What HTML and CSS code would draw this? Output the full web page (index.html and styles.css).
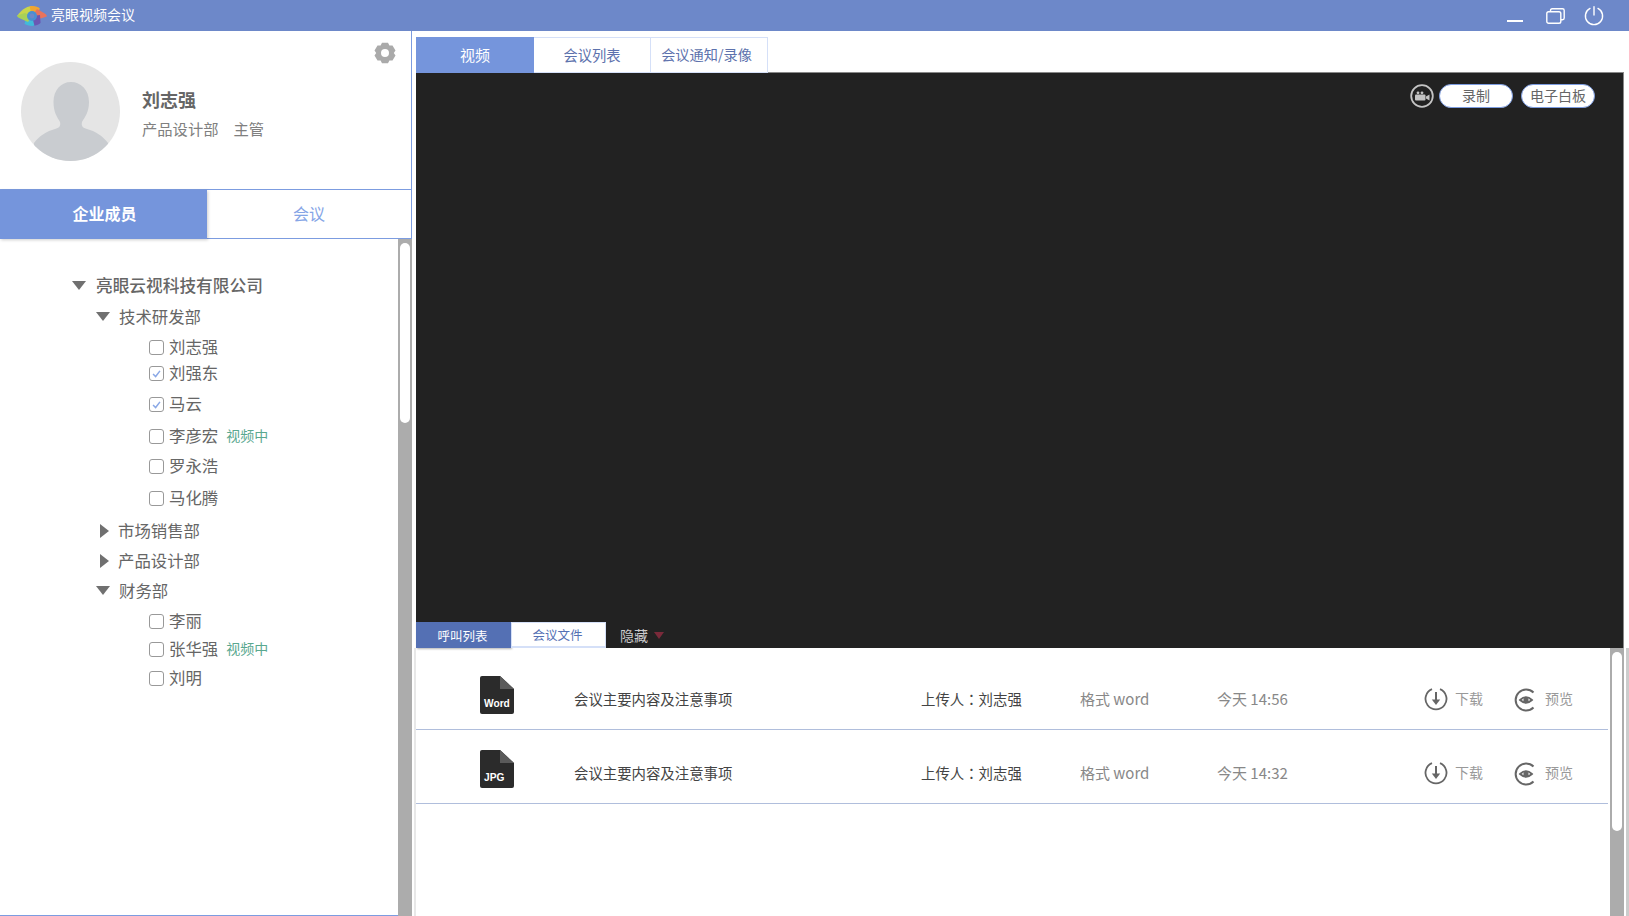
FILE: index.html
```html
<!DOCTYPE html>
<html>
<head>
    <meta charset="utf-8">
    <title>亮眼视频会议</title>
    <link rel="stylesheet" href="styles.css">
</head>
<body>
<div class="app">
    <header class="titlebar">
        <svg class="logo" viewBox="0 0 30 20">
            <defs><clipPath id="eye"><path d="M0 10 C6 2 11 0 16 0 C21 0 26 4 30 10 C26 16 21 20 15 20 C9 20 4 16 0 10Z"/></clipPath></defs>
            <g clip-path="url(#eye)">
                <path d="M15 10 L-2 10 L6 -2 L14 -2Z" fill="#c8d54c"/>
                <path d="M15 10 L12 -2 L24 -2 L22 5Z" fill="#f0a532"/>
                <path d="M15 10 L20 3 L32 10 L22 13Z" fill="#e9735c"/>
                <path d="M15 10 L23 9 L24 22 L16 22Z" fill="#6b57b3"/>
                <path d="M15 10 L18 22 L6 22 L9 13Z" fill="#42b9da"/>
                <path d="M15 10 L11 16 L-2 10 L8 7Z" fill="#a8d058"/>
                <circle cx="15" cy="10" r="5" fill="#4a8fd2"/>
                <circle cx="15" cy="10" r="2.4" fill="#6d88c9"/>
            </g>
        </svg>
        <span class="app-name">亮眼视频会议</span>
        <div class="win-btns">
            <svg class="win-min" viewBox="0 0 16 2"><rect width="16" height="2" fill="#fff"/></svg>
            <svg class="win-max" viewBox="0 0 19 16" fill="none" stroke="#fff" stroke-width="1.4">
                <path d="M4.5 3.5 V2.5 Q4.5 .8 6.2 .8 H16.5 Q18.2 .8 18.2 2.5 V10 Q18.2 11.7 16.5 11.7 H15"/>
                <rect x=".8" y="3.7" width="14" height="11.5" rx="1.8"/>
            </svg>
            <svg class="win-power" viewBox="0 0 20 20" fill="none" stroke="#fff" stroke-width="1.4" stroke-linecap="round">
                <path d="M6 2.4 A8.6 8.6 0 1 0 14 2.4"/>
                <path d="M10 .8 V9"/>
            </svg>
        </div>
    </header>

    <div class="main">
        <aside class="sidebar">
            <section class="profile">
                <svg class="avatar" viewBox="0 0 99 99">
                    <defs><clipPath id="face"><circle cx="49.5" cy="49.5" r="49.5"/></clipPath></defs>
                    <circle cx="49.5" cy="49.5" r="49.5" fill="#e5e5e5"/>
                    <g clip-path="url(#face)" fill="#c9ccd0">
                        <path d="M50 20 C60 20 68 28 68 40 C68 50 64 55 61 60 C60 64 62 66 66 67 C74 69 82 74 87 81 L87 99 L13 99 L13 81 C18 74 26 69 34 67 C38 66 40 64 39 60 C36 55 32.5 50 32.5 40 C32.5 28 40 20 50 20Z"/>
                    </g>
                </svg>
                <div class="who">
                    <div class="who-name">刘志强</div>
                    <div class="who-dept"><span>产品设计部</span><span>主管</span></div>
                </div>
                <svg class="gear" viewBox="0 0 22 22" fill="#aaa">
                    <path fill-rule="evenodd" d="M8 .8 H14 L15.4 3.6 L18.5 3.4 L21.5 8.6 L19.8 11 L21.5 13.4 L18.5 18.6 L15.4 18.4 L14 21.2 H8 L6.6 18.4 L3.5 18.6 L.5 13.4 L2.2 11 L.5 8.6 L3.5 3.4 L6.6 3.6Z M11 7 A4 4 0 1 0 11 15 A4 4 0 1 0 11 7Z"/>
                </svg>
            </section>

            <nav class="side-tabs">
                <div class="side-tab active">企业成员</div>
                <div class="side-tab">会议</div>
            </nav>

            <div class="tree-wrap">
                <div class="tree">
                    <div class="row lv0 company"><i class="tri-down"></i>亮眼云视科技有限公司</div>
                    <div class="row lv1 mt1"><i class="tri-down"></i>技术研发部</div>
                    <div class="row lv2"><i class="check"></i>刘志强</div>
                    <div class="row lv2 mtn4"><i class="check on"><svg viewBox="0 0 15 15"><path d="M3.5 8 L6.5 11 L11.5 4.5" fill="none" stroke="#8aa8e6" stroke-width="1.7"/></svg></i>刘强东</div>
                    <div class="row lv2 mt1"><i class="check on"><svg viewBox="0 0 15 15"><path d="M3.5 8 L6.5 11 L11.5 4.5" fill="none" stroke="#8aa8e6" stroke-width="1.7"/></svg></i>马云</div>
                    <div class="row lv2 mt2"><i class="check"></i>李彦宏<span class="live">视频中</span></div>
                    <div class="row lv2"><i class="check"></i>罗永浩</div>
                    <div class="row lv2 mt2"><i class="check"></i>马化腾</div>
                    <div class="row lv1 mt3"><i class="tri-right"></i>市场销售部</div>
                    <div class="row lv1"><i class="tri-right"></i>产品设计部</div>
                    <div class="row lv1"><i class="tri-down"></i>财务部</div>
                    <div class="row lv2"><i class="check"></i>李丽</div>
                    <div class="row lv2 mtn2"><i class="check"></i>张华强<span class="live">视频中</span></div>
                    <div class="row lv2 mtn1"><i class="check"></i>刘明</div>
                </div>
                <div class="scroll-track side-scroll"><div class="scroll-thumb"></div></div>
            </div>
        </aside>

        <main class="content">
            <nav class="top-tabs">
                <div class="top-tab active">视频</div>
                <div class="top-tab mid">会议列表</div>
                <div class="top-tab last">会议通知/录像</div>
            </nav>

            <section class="video">
                <div class="video-tools">
                    <svg class="cam" viewBox="0 0 24 24">
                        <circle cx="12" cy="12" r="10.8" fill="none" stroke="#c4c4c4" stroke-width="1.8"/>
                        <rect x="5" y="10.5" width="10.5" height="6" rx="1" fill="#c4c4c4"/>
                        <circle cx="8" cy="8.8" r="1.4" fill="#c4c4c4"/>
                        <circle cx="12" cy="8.8" r="1.4" fill="#c4c4c4"/>
                        <path d="M16 12.5 L19.5 10.5 V16.5 L16 14.5Z" fill="#c4c4c4"/>
                    </svg>
                    <button class="pill">录制</button>
                    <button class="pill">电子白板</button>
                </div>
                <div class="sub-tabs">
                    <div class="sub-tab active">呼叫列表</div>
                    <div class="sub-tab">会议文件</div>
                    <div class="hide-btn">隐藏<i class="tri-red"></i></div>
                </div>
            </section>

            <section class="files">
                <div class="file-list">
                    <div class="file-row">
                        <svg class="file-icon" viewBox="0 0 34 38">
                            <path d="M2 0 H20 L34 13 V36 Q34 38 32 38 H2 Q0 38 0 36 V2 Q0 0 2 0Z" fill="#2b2b2b"/>
                            <path d="M20 0 L34 13 H20Z" fill="#5a5a5a"/>
                            <text x="4" y="31" class="file-type">Word</text>
                        </svg>
                        <span class="file-name">会议主要内容及注意事项</span>
                        <span class="file-owner">上传人<span class="colon">：</span>刘志强</span>
                        <span class="file-meta">格式 word</span>
                        <span class="file-meta">今天 14:56</span>
                        <span class="file-action">
                            <svg class="act-icon" viewBox="0 0 24 24" fill="none" stroke="#666" stroke-width="1.8"><path d="M8 2.2 A10.5 10.5 0 1 0 16 2.2"/><path d="M12 5 V13.5" stroke-width="2"/><path d="M7.8 12.5 H16.2 L12 18Z" fill="#666" stroke="none"/></svg>
                            下载
                        </span>
                        <span class="file-action">
                            <svg class="act-icon act-eye" viewBox="0 0 24 24" fill="none" stroke="#666" stroke-width="2"><path d="M19.5 4.5 A10.5 10.5 0 1 0 19.5 19.5"/><path d="M6 12 Q12 6.5 18 12 Q12 17.5 6 12Z" stroke-width="1.8"/><circle cx="12" cy="12" r="2.6" fill="#666" stroke="none"/></svg>
                            预览
                        </span>
                    </div>
                    <div class="file-row">
                        <svg class="file-icon" viewBox="0 0 34 38">
                            <path d="M2 0 H20 L34 13 V36 Q34 38 32 38 H2 Q0 38 0 36 V2 Q0 0 2 0Z" fill="#2b2b2b"/>
                            <path d="M20 0 L34 13 H20Z" fill="#5a5a5a"/>
                            <text x="4" y="31" class="file-type">JPG</text>
                        </svg>
                        <span class="file-name">会议主要内容及注意事项</span>
                        <span class="file-owner">上传人<span class="colon">：</span>刘志强</span>
                        <span class="file-meta">格式 word</span>
                        <span class="file-meta">今天 14:32</span>
                        <span class="file-action">
                            <svg class="act-icon" viewBox="0 0 24 24" fill="none" stroke="#666" stroke-width="1.8"><path d="M8 2.2 A10.5 10.5 0 1 0 16 2.2"/><path d="M12 5 V13.5" stroke-width="2"/><path d="M7.8 12.5 H16.2 L12 18Z" fill="#666" stroke="none"/></svg>
                            下载
                        </span>
                        <span class="file-action">
                            <svg class="act-icon act-eye" viewBox="0 0 24 24" fill="none" stroke="#666" stroke-width="2"><path d="M19.5 4.5 A10.5 10.5 0 1 0 19.5 19.5"/><path d="M6 12 Q12 6.5 18 12 Q12 17.5 6 12Z" stroke-width="1.8"/><circle cx="12" cy="12" r="2.6" fill="#666" stroke="none"/></svg>
                            预览
                        </span>
                    </div>
                </div>
                <div class="scroll-track file-scroll"><div class="scroll-thumb"></div></div>
            </section>
        </main>
    </div>
</div>
</body>
</html>
```

FILE: styles.css
```css
* { box-sizing: border-box; }
html, body { margin: 0; height: 100%; overflow: hidden; background: #fff; }
body { font-family: "Noto Sans CJK SC", "Noto Sans", sans-serif; color: #666; }
.app { display: flex; flex-direction: column; height: 916px; }

/* title bar */
.titlebar { display: flex; align-items: center; height: 31px; padding-left: 17px; background: #6d88c9; flex: none; }
.logo { width: 30px; height: 20px; }
.app-name { margin: -3px 0 0 4px; font-size: 14px; color: #fff; }
.win-btns { display: flex; align-items: center; margin-left: auto; padding-right: 25px; }
.win-min { width: 16px; height: 2px; margin-top: 10px; }
.win-max { width: 19px; height: 16px; margin-left: 23px; }
.win-power { width: 20px; height: 20px; margin-left: 19px; }

.main { display: flex; flex: 1; min-height: 0; }

/* left side */
.sidebar { display: flex; flex-direction: column; width: 412px; flex: none; }
.profile { display: flex; align-items: center; height: 158px; padding: 3px 0 0 21px; border-right: 1px solid #7c9ce0; position: relative; }
.avatar { width: 99px; height: 99px; flex: none; }
.who { margin-left: 22px; margin-top: 2px; }
.who-name { font-size: 18px; font-weight: 700; color: #666; line-height: 26px; }
.who-dept { display: flex; gap: 15px; margin-top: 4px; font-size: 15.3px; color: #808080; line-height: 24px; }
.gear { position: absolute; top: 11px; right: 15px; width: 22px; height: 22px; }

.side-tabs { display: flex; height: 50px; border: 1px solid #7c9ce0; border-width: 1px 1px 1px 0; }
.side-tab { display: flex; align-items: center; justify-content: center; flex: 1; padding-bottom: 2px; font-size: 16px; color: #85a5e6; }
.side-tab.active { flex: none; width: 207px; margin-bottom: -1px; padding: 0 0 4px 2px; background: #7595dc; color: #fff; font-weight: 700; box-shadow: 1px 1px 3px rgba(0,0,0,.2); }

.tree-wrap { display: flex; flex: 1; min-height: 0; }
.tree { flex: 1; padding-top: 31px; border-bottom: 1px solid #7c9ce0; font-size: 16.4px; color: #666; }
.row { display: flex; align-items: center; height: 30px; }
.lv0 { padding-left: 72px; }
.lv1 { padding-left: 96px; }
.lv2 { padding-left: 149px; }
.company { font-size: 16.7px; font-weight: 500; }
.mt1 { margin-top: 1px; }
.mt2 { margin-top: 2px; }
.mt3 { margin-top: 3px; }
.mtn1 { margin-top: -1px; }
.mtn2 { margin-top: -2px; }
.mtn4 { margin-top: -4px; }

.tri-down { width: 0; height: 0; margin: 1px 9px 0 0; border: 7px solid transparent; border-top: 9px solid #707070; border-bottom: 0; }
.company .tri-down { margin-right: 10px; }
.tri-right { width: 0; height: 0; margin: 1px 9px 0 4px; border: 7px solid transparent; border-left: 9px solid #707070; border-right: 0; }
.check { display: block; width: 15px; height: 15px; margin: 2px 5px 0 0; border: 1px solid #999; border-radius: 3px; background: #fff; }
.check svg { display: block; width: 13px; height: 13px; }
.live { margin-left: 8px; font-size: 14px; color: #5aa88f; }

.scroll-track { display: flex; justify-content: center; background: #acacac; flex: none; width: 14px; }
.scroll-thumb { width: 10px; background: #fff; border-radius: 5px; }
.side-scroll .scroll-thumb { height: 180px; margin-top: 4px; }

/* right side */
.content { display: flex; flex-direction: column; flex: 1; min-width: 0; padding: 6px 5px 0 4px; }
.top-tabs { display: flex; height: 35px; flex: none; }
.top-tab { display: flex; align-items: center; justify-content: center; position: relative; height: 36px; padding-bottom: 2px; font-size: 14.3px; color: #5d72ad; border: 1px solid #d5e0f8; border-left: 0; background: #fff; }
.top-tab.active { width: 118px; background: #7595dc; border: 0; color: #fff; font-size: 15px; }
.top-tab.mid { width: 117px; }
.top-tab.last { width: 117px; padding-right: 5px; font-size: 14.2px; }

.video { display: flex; flex-direction: column; height: 576px; flex: none; background: #222; border-top: 1px solid #888; border-right: 1px solid #888; }
.video-tools { display: flex; align-items: center; justify-content: flex-end; padding: 11px 28px 0 0; }
.cam { width: 24px; height: 24px; margin-right: 5px; }
.pill { width: 74px; height: 24px; padding: 0 0 2px; margin-left: 8px; border: 1px solid #7c9ce0; border-radius: 12px; background: #fff; color: #666; font: 14px "Noto Sans CJK SC", sans-serif; }
.cam + .pill { margin-left: 0; }
.sub-tabs { display: flex; align-items: center; margin-top: auto; height: 26px; }
.sub-tab { display: flex; align-items: center; justify-content: center; width: 95px; height: 26px; padding-right: 2px; font-size: 12.5px; color: #5470b4; background: #fff; border: 1px solid #d5e0f8; border-bottom-width: 2px; }
.sub-tab.active { background: #5470b4; color: #fff; border: 0; box-shadow: 1px 1px 2px rgba(0,0,0,.3); }
.hide-btn { display: flex; align-items: center; margin-left: 14px; font-size: 14px; color: #ccc; }
.tri-red { width: 0; height: 0; margin-left: 6px; border: 5px solid transparent; border-top: 7px solid #7a2a3a; border-bottom: 0; }

.files { display: flex; flex: 1; min-height: 0; margin: 0 -5px 0 -2px; padding-right: 2px; border-left: 2px solid #e8e8e8; border-right: 3px solid #ccc; }
.file-list { flex: 1; min-width: 0; margin-right: 2px; padding-top: 8px; }
.file-row { display: grid; grid-template-columns: 94px 347px 159px 137px 207px 90px 1fr; align-items: center; align-content: start; height: 74px; padding: 26px 0 0 64px; border-bottom: 1px solid #b0bedc; font-size: 14.4px; color: #444; }
.file-icon { width: 34px; height: 38px; margin: -6px 0 0; }
.file-type { font: 700 10.2px "Liberation Sans", sans-serif; fill: #fff; }
.colon { font-family: "Noto Sans CJK TC", sans-serif; }
.file-meta { font-size: 15px; color: #888; }
.file-action { display: flex; align-items: center; gap: 7px; font-size: 14px; color: #999; }
.act-icon { width: 24px; height: 24px; margin-top: 2px; flex: none; }
.act-eye { margin-top: 4px; }
.file-scroll .scroll-thumb { height: 179px; margin-top: 4px; }
```
